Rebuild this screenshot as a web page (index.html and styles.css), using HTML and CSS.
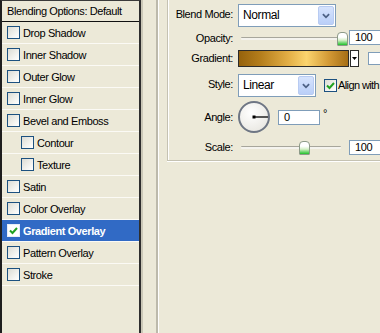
FILE: index.html
```html
<!DOCTYPE html>
<html lang="en">
<head>
    <meta charset="UTF-8">
    <title>Layer Style</title>
    <link rel="stylesheet" href="styles.css">
</head>
<body>
    <div class="dialog">
        <div class="styles-list">
            <div class="list-head">Blending Options: Default</div>
            <div class="list-item"><span class="check"></span>Drop Shadow</div>
            <div class="list-item"><span class="check"></span>Inner Shadow</div>
            <div class="list-item"><span class="check"></span>Outer Glow</div>
            <div class="list-item"><span class="check"></span>Inner Glow</div>
            <div class="list-item"><span class="check"></span>Bevel and Emboss</div>
            <div class="list-item sub"><span class="check"></span>Contour</div>
            <div class="list-item sub"><span class="check"></span>Texture</div>
            <div class="list-item"><span class="check"></span>Satin</div>
            <div class="list-item"><span class="check"></span>Color Overlay</div>
            <div class="list-item selected">
                <span class="check"><svg viewBox="0 0 11 11"><polyline points="2,5.5 4.5,8 9,3" /></svg></span>Gradient Overlay
            </div>
            <div class="list-item"><span class="check"></span>Pattern Overlay</div>
            <div class="list-item"><span class="check"></span>Stroke</div>
        </div>

        <div class="options">
            <div class="group">
                <div class="row row-blend">
                    <span class="lbl">Blend Mode:</span>
                    <div class="select select-wide">
                        <span class="select-text">Normal</span>
                        <span class="drop"><svg viewBox="0 0 9 6"><polyline points="1,1 4.5,4.5 8,1" /></svg></span>
                    </div>
                </div>
                <div class="row row-opacity">
                    <span class="lbl">Opacity:</span>
                    <div class="slider">
                        <div class="track"></div>
                        <div class="thumb thumb-opacity"></div>
                    </div>
                    <div class="input input-num">100</div>
                </div>
                <div class="row row-gradient">
                    <span class="lbl">Gradient:</span>
                    <div class="swatch"></div>
                    <div class="swatch-drop"><svg viewBox="0 0 5 3"><polygon points="0,0 5,0 2.5,3" /></svg></div>
                    <span class="check reverse"></span>
                </div>
                <div class="row row-style">
                    <span class="lbl">Style:</span>
                    <div class="select select-narrow">
                        <span class="select-text">Linear</span>
                        <span class="drop"><svg viewBox="0 0 9 6"><polyline points="1,1 4.5,4.5 8,1" /></svg></span>
                    </div>
                    <span class="check align"><svg viewBox="0 0 11 11"><polyline points="2,5.5 4.5,8 9,3" /></svg></span>
                    <span class="align-text">Align with</span>
                </div>
                <div class="row row-angle">
                    <span class="lbl">Angle:</span>
                    <div class="dial">
                        <svg viewBox="0 0 28 28">
                            <line x1="14" y1="14" x2="28" y2="14" />
                            <rect x="12.5" y="12.5" width="3" height="3" />
                        </svg>
                    </div>
                    <div class="input input-angle">0</div>
                    <span class="degree">°</span>
                </div>
                <div class="row row-scale">
                    <span class="lbl">Scale:</span>
                    <div class="slider">
                        <div class="track"></div>
                        <div class="thumb thumb-scale"></div>
                    </div>
                    <div class="input input-num">100</div>
                </div>
            </div>
        </div>
    </div>
</body>
</html>
```

FILE: styles.css
```css
body {
    margin: 0;
    background-color: #ece9d8;
    font-family: "Liberation Sans", Arial, sans-serif;
    font-size: 11px;
    letter-spacing: -0.4px;
    color: #000;
    overflow: hidden;
}
.dialog {
    display: flex;
    height: 333px;
}

/* left list of effects */
.styles-list {
    width: 137px;
    border-left: 2px solid #1e1e1e;
    border-right: 2px solid #2e2e2e;
    border-top: 1px solid #3a3a3a;
    box-shadow: 2px 0 0 #cbc8b8;
    flex-shrink: 0;
}
.list-head {
    height: 20px;
    line-height: 20px;
    padding-left: 5px;
    border-bottom: 1px solid #111;
}
.list-item {
    display: flex;
    align-items: center;
    height: 21px;
    padding-left: 5px;
    border-bottom: 1px solid #fbfaf5;
}
.list-item.sub {
    padding-left: 19px;
}
.list-item.selected {
    background-color: #316ac5;
    color: #fff;
    font-weight: bold;
}
.check {
    width: 11px;
    height: 11px;
    border: 1px solid #1c5180;
    background: linear-gradient(135deg, #dcdcd4, #f6f6f3 70%, #fff);
    margin-right: 3px;
    flex-shrink: 0;
    display: flex;
}
.list-item.selected .check {
    border-color: #e8eef8;
    background: #fff;
}
.check svg {
    width: 11px;
    height: 11px;
}
.check polyline {
    fill: none;
    stroke: #21a121;
    stroke-width: 2;
}

/* right options panel */
.options {
    margin-left: 15px;
    border-left: 2px solid #bdbaab;
    box-shadow: inset 1px 0 0 #fff;
    flex: 1;
    padding-left: 9px;
}
.group {
    border-left: 1px solid #c5c2b2;
    border-bottom: 1px solid #c5c2b2;
    box-shadow: inset 1px 0 0 #fff, 0 1px 0 #fff;
    padding: 4px 0 3px 1px;
}
.row {
    display: flex;
    align-items: center;
    white-space: nowrap;
}
.lbl {
    width: 64px;
    text-align: right;
    margin-right: 5px;
    flex-shrink: 0;
}
.row-blend { height: 23px; }
.row-blend .lbl { margin-top: -3px; }
.row-opacity { height: 21px; }
.row-gradient { height: 20px; }
.row-style { height: 23px; margin-top: 6px; }
.row-style .lbl { margin-top: -3px; }
.row-angle { height: 40px; }
.row-scale { height: 20px; }

.select {
    display: flex;
    align-items: stretch;
    height: 21px;
    border: 1px solid #7f9db9;
    background-color: #fff;
}
.select-wide { width: 96px; }
.select-narrow { width: 76px; }
.select-text {
    flex: 1;
    padding-left: 4px;
    line-height: 21px;
    font-size: 12px;
}
.drop {
    width: 14px;
    margin: 1px;
    border: 1px solid #b8cbf2;
    border-radius: 2px;
    background: linear-gradient(#d6e3fd, #bacff8);
    display: flex;
    align-items: center;
    justify-content: center;
}
.drop svg {
    width: 8px;
    height: 6px;
}
.drop polyline {
    fill: none;
    stroke: #4d6185;
    stroke-width: 2;
}

.slider {
    position: relative;
    width: 108px;
    height: 16px;
    margin-right: 3px;
}
.track {
    position: absolute;
    left: 3px;
    right: 5px;
    top: 7px;
    height: 2px;
    border-top: 1px solid #a7a69c;
    background-color: #f4f3ee;
    border-radius: 1px;
}
.thumb {
    position: absolute;
    top: 2px;
    width: 9px;
    height: 12px;
    border: 1px solid #8c9a88;
    border-radius: 4px 4px 1px 1px;
    background: linear-gradient(#fff 35%, #d5f0c7 60%, #21c12b);
}
.thumb-opacity { left: 99px; }
.thumb-scale { left: 61px; }

.input {
    height: 13px;
    line-height: 13px;
    border: 1px solid #7f9db9;
    background-color: #fff;
    padding-left: 5px;
}
.input-num {
    width: 40px;
}
.input-angle {
    width: 35px;
}

.swatch {
    width: 109px;
    height: 15px;
    border: 1px solid #2a2a2a;
    background: linear-gradient(to right, #95620c, #b57e1c 20%, #e2ae45 45%, #fbd46e 62%, #d49a36 82%, #a56e15);
}
.swatch-drop {
    width: 7px;
    height: 15px;
    margin-left: 1px;
    border: 1px solid #2a2a2a;
    background-color: #fff;
    display: flex;
    align-items: center;
    justify-content: center;
}
.swatch-drop svg {
    width: 5px;
    height: 3px;
}
.check.reverse {
    margin-left: 9px;
    width: 14px;
    border-color: #7f9db9;
    background: #fff;
}

.check.align {
    margin-left: 8px;
    margin-right: 1px;
}
.align-text {
    margin-top: -1px;
    letter-spacing: -0.6px;
}

.dial {
    width: 32px;
    height: 32px;
    margin-right: 8px;
    border-radius: 50%;
    box-sizing: border-box;
    border: 2px solid #6e7684;
    background: radial-gradient(circle at 40% 35%, #fff, #ecebe6 70%, #dcdcd5);
    display: flex;
}
.dial svg {
    width: 28px;
    height: 28px;
}
.dial line {
    stroke: #000;
    stroke-width: 1.3;
}
.input-angle + .degree {
    margin-left: 3px;
    margin-top: -8px;
}
```
